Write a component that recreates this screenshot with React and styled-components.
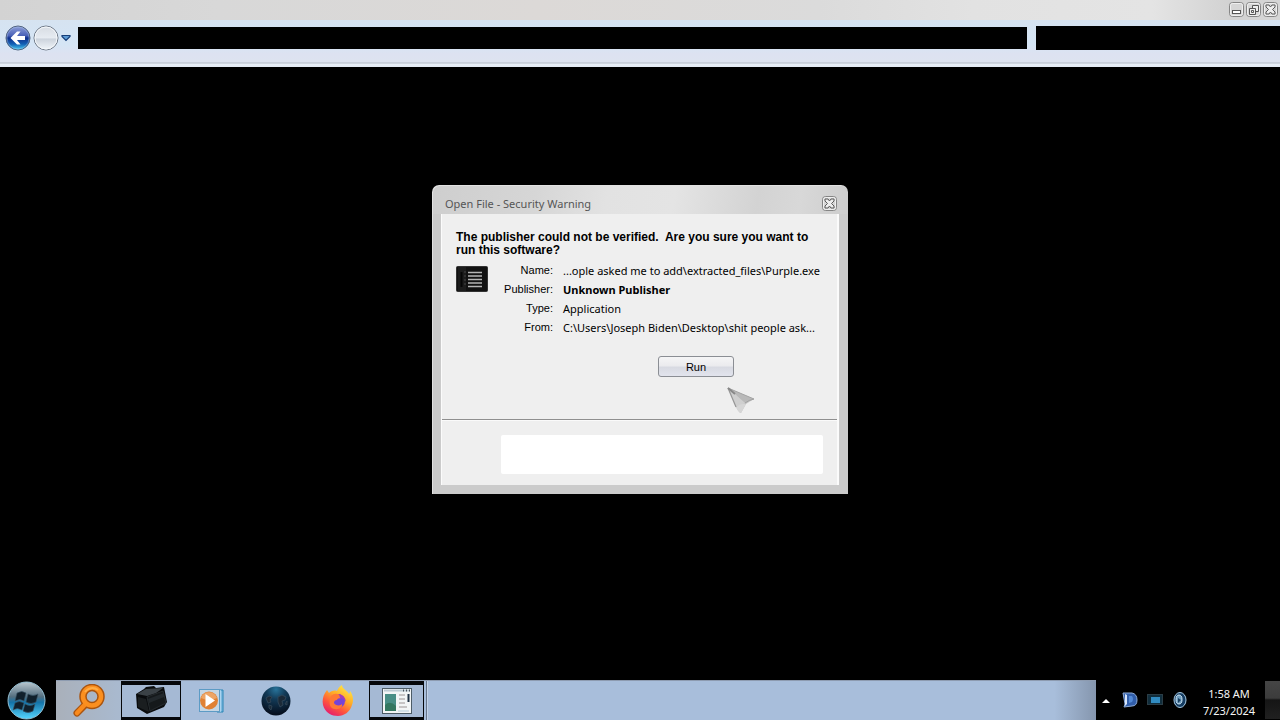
import React from "react";
import styled, { createGlobalStyle, css } from "styled-components";

const GlobalStyle = createGlobalStyle`
  * { box-sizing: border-box; }
  body { margin: 0; background: #000; }
  button, input { font: inherit; }
`;

const ui = `"Noto Sans", "Open Sans", sans-serif`;
const classic = `"Liberation Sans", Arial, sans-serif`;

const Screen = styled.div`
  min-height: 100vh;
  display: flex;
  flex-direction: column;
  background: #000;
  font-family: ${ui};
  font-size: 11px;
`;

const TitleStrip = styled.header`
  height: 20px;
  flex: none;
  display: flex;
  justify-content: flex-end;
  align-items: center;
  gap: 2px;
  padding: 0 2px 1px;
  background: linear-gradient(90deg, #d3d3d3 0%, #d8d8d8 17%, #dcd9d7 42%, #dbdbdb 64%, #e2e2e2 76%, #e4e4e4 90%, #d2d2d2 96%, #d6d6d6 100%);
`;

const IconButton = styled.button`
  flex: none;
  display: flex;
  padding: 0;
  border: 0;
  background: none;
`;

const NavBar = styled.nav`
  height: 47px;
  flex: none;
  display: flex;
  align-items: flex-start;
  padding: 6px 0 0 5px;
  background: linear-gradient(180deg, #d6e3f1 0, #d5e5f5 24px, #dde2f1 34px, #dde3f0 42px, #b4bbc6 43px, #e9f0f8 44px, #e3eaf4 47px);
`;

const NavButtons = styled.div`
  display: flex;
  align-items: center;
  gap: 2px;
  width: 73px;
  height: 24px;
  flex: none;
`;

const Fields = styled.div`
  flex: 1;
  display: flex;
  gap: 9px;
  min-width: 0;
`;

const Field = styled.input`
  min-width: 0;
  height: ${(p) => (p.$search ? 24 : 22)}px;
  flex: ${(p) => (p.$search ? "0 0 244px" : "1 1 0")};
  margin-top: ${(p) => (p.$search ? 0 : 1)}px;
  padding: 0 6px;
  border: 0;
  border-radius: 0;
  background: #000;
  color: #fff;
`;

const Workspace = styled.main`
  flex: 1;
  padding: 118px 16px 24px;
  background: #000;
`;

const Dialog = styled.section`
  width: 416px;
  max-width: 100%;
  margin: 0 auto;
  padding: 0 9px 9px;
  border-radius: 7px 7px 0 0;
  background:
    linear-gradient(100deg, #cecece 0%, #d6d6d6 25%, #e2e2e2 42%, #e4e4e4 58%, #d3d3d3 78%, #d8d8d8 88%, #cdcdcd 100%) top / 100% 29px no-repeat,
    #cbcbcb;
  box-shadow: inset 1px 1px 0 #e2e2e2;
`;

const DialogTitle = styled.div`
  height: 29px;
  display: flex;
  align-items: center;
  justify-content: space-between;
  padding: 8px 2px 0 4px;
`;

const Title = styled.h1`
  margin: 0;
  font-size: 11px;
  line-height: 16px;
  font-weight: 400;
  color: #555;
`;

const DialogBody = styled.div`
  border: solid #fbfbfb;
  border-width: 0 2px 0 1px;
  background: #efefef;
`;

const Message = styled.div`
  padding: 17px 14px 42px;
  border-bottom: 1px solid #8f8f8f;
`;

const Warning = styled.h2`
  margin: 0;
  font-family: ${classic};
  font-size: 12px;
  line-height: 13px;
  font-weight: 700;
  white-space: pre-wrap;
  color: #000;
`;

const Summary = styled.div`
  display: flex;
  gap: 10px;
  margin-top: 4px;
`;

const AppIcon = styled.svg`
  flex: none;
  margin-top: 5px;
`;

const Details = styled.dl`
  flex: 1;
  min-width: 0;
  margin: 0;
  display: grid;
  grid-template-columns: 55px 1fr;
  column-gap: 10px;
  line-height: 19px;
  color: #000;
`;

const Label = styled.dt`
  font-family: ${classic};
  font-size: 11px;
  text-align: right;
`;

const Value = styled.dd`
  margin: 0;
  white-space: nowrap;
  font-weight: ${(p) => (p.$strong ? 700 : 400)};
`;

const Actions = styled.div`
  display: flex;
  justify-content: flex-end;
  margin-top: 19px;
  padding-right: 89px;
`;

const RunButton = styled.button`
  width: 76px;
  height: 21px;
  padding: 0;
  border: 1px solid #8b8e94;
  border-radius: 3px;
  background: linear-gradient(180deg, #f5f5f6 0%, #ebebee 45%, #d8dae2 55%, #e2e4ed 100%);
  font-family: ${classic};
  font-size: 11px;
  color: #000;
`;

const Footer = styled.div`
  padding: 14px 14px 11px 59px;
  border-top: 1px solid #fafafa;
`;

const Notice = styled.div`
  height: 39px;
  border-radius: 2px;
  background: #fff;
`;

const Pointer = styled.svg`
  position: absolute;
  left: calc(50% + 86px);
  top: 386px;
  pointer-events: none;
`;

const Taskbar = styled.footer`
  height: 40px;
  flex: none;
  display: flex;
  background: #000;
`;

const StartButton = styled(IconButton)`
  width: 56px;
  padding: 1px 0 0 7px;
`;

const TaskList = styled.div`
  flex: 1;
  min-width: 0;
  display: flex;
  border-top: 1px solid #8d9bb0;
  background: linear-gradient(90deg, #a9b0ba 0, #a9b9ce 60px, #a8bedb 130px, #a8bedb 96%, #8596ae 100%);
`;

const active = css`
  border: solid #05070a;
  border-width: 4px 1px 3px;
  background: #a5b9d4;
`;

const Task = styled.button`
  width: ${(p) => p.$width}px;
  flex: none;
  display: flex;
  align-items: center;
  justify-content: center;
  padding: 0;
  border: 0;
  background: none;
  ${(p) => p.$active && active}
`;

const Divider = styled.div`
  width: 2px;
  margin-left: 2px;
  border-left: 1px solid #66758a;
  border-right: 1px solid #c3d3e8;
`;

const Tray = styled.div`
  width: 184px;
  flex: none;
  display: flex;
  align-items: center;
  padding-left: 6px;
`;

const TrayIcons = styled.div`
  flex: 1;
  display: flex;
  align-items: center;
  gap: 9px;
`;

const HiddenIcons = styled(IconButton)`
  margin-right: 3px;
`;

const Clock = styled.time`
  width: 64px;
  padding-top: 3px;
  font-size: 11px;
  line-height: 17px;
  text-align: center;
  color: #f4f4f4;
`;

const ShowDesktop = styled.button`
  width: 15px;
  height: 38px;
  margin-left: 4px;
  padding: 0;
  border: 0;
  background: linear-gradient(180deg, #454545 0, #3c3c3c 45%, #151515 50%, #202020 100%);
`;

const BoxedGlyph = ({ children }) => (
  <svg width="15" height="15" viewBox="0 0 15 15" fill="none">
    <rect x=".5" y=".5" width="14" height="14" rx="3" fill="#d6d6d6" stroke="#858585" />
    <rect x="1.5" y="1.5" width="12" height="12" rx="2" stroke="#efefef" />
    {children}
  </svg>
);

const CloseGlyph = () => (
  <BoxedGlyph>
    <path d="M3 3h3l1.500 2L9 3h3v2L9.500 7.500 12 10v2H9l-1.500-2L6 12H3v-2l2.500-2.500L3 5z" fill="#eee" stroke="#5a5a5a" />
  </BoxedGlyph>
);

const details = [
  { label: "Name:", value: "...ople asked me to add\\extracted_files\\Purple.exe" },
  { label: "Publisher:", value: "Unknown Publisher", strong: true },
  { label: "Type:", value: "Application" },
  { label: "From:", value: "C:\\Users\\Joseph Biden\\Desktop\\shit people ask..." },
];

const SearchArt = () => (
  <svg width="34" height="34" viewBox="0 0 34 34" fill="none">
    <path d="M12.500 21.500L5 29" stroke="#a9540f" strokeWidth="7" strokeLinecap="round" />
    <circle cx="20" cy="12.500" r="9" stroke="#a9540f" strokeWidth="7.500" />
    <path d="M13.500 20L5 29" stroke="#f98a1c" strokeWidth="4.500" strokeLinecap="round" />
    <circle cx="20" cy="12.500" r="9" stroke="#fb8f1f" strokeWidth="4.500" />
    <path d="M13 8a9 9 0 0 1 13-2" stroke="#ffad45" strokeWidth="2" />
  </svg>
);

const FolderArt = () => (
  <svg width="34" height="30" viewBox="0 0 34 30">
    <path d="M2 8L10 3l2-2 8-1 2 2 8-1 3 15-3 5-17 7L3 22z" fill="#090b0d" />
    <path d="M3 8l9-5 17-1-7 5-9 3z" fill="#3a4146" />
    <path d="M13 11l16-6 3 12-16 8z" fill="#15191b" stroke="#2b3135" strokeWidth=".8" />
    <path d="M4 11l8 2 3 13-11-5z" fill="#1a1e20" />
    <path d="M14 13l16-6v4l-15 6z" fill="#22282c" />
  </svg>
);

const PlayerArt = () => (
  <svg width="30" height="26" viewBox="0 0 30 26">
    <path d="M19 2h6v22h-6z" fill="#7eb9df" stroke="#2985b5" />
    <path d="M22 2v22" stroke="#d7efff" />
    <rect x="1.500" y="1.500" width="20" height="22" fill="#c5d6e4" stroke="#5c9bc5" />
    <circle cx="11" cy="12.500" r="9" fill="#e08134" />
    <path d="M3 10a8.500 8.500 0 0 1 16 0q-8 4-16 0z" fill="#eda566" />
    <path d="M7.500 6l9.500 6.500-9.500 6.500z" fill="#fff" />
  </svg>
);

const GlobeArt = () => (
  <svg width="30" height="30" viewBox="0 0 30 30">
    <defs>
      <radialGradient id="globe" cx=".5" cy=".1" r=".85">
        <stop offset="0" stopColor="#28739a" />
        <stop offset=".4" stopColor="#123a57" />
        <stop offset="1" stopColor="#06101f" />
      </radialGradient>
    </defs>
    <circle cx="15" cy="15" r="14.500" fill="url(#globe)" />
    <path d="M5 12l3-2 3 1-2 3 1 2-3 1zM8 19l3 1-1 4-2-2zM17 11l4-2 4 2-1 3-3 1 1 4-3 2-2-5zM24 18l2-3v4z" fill="#1b2a38" stroke="#34495a" strokeWidth=".8" />
  </svg>
);

const FirefoxArt = () => (
  <svg width="32" height="32" viewBox="0 0 32 32">
    <defs>
      <linearGradient id="fox" x1=".85" y1="0" x2=".25" y2="1">
        <stop offset="0" stopColor="#fff04c" />
        <stop offset=".4" stopColor="#ffad27" />
        <stop offset=".7" stopColor="#ff553c" />
        <stop offset="1" stopColor="#e31873" />
      </linearGradient>
    </defs>
    <path d="M3 8l2-3 2 3c2-2 5-3 8-2 1-3 3-5 5-6 0 4 5 5 7 9 1-1 1-2 1-3 3 4 4 9 2 14-2 7-8 11-14 11S3 28 1 20C0 16 1 11 3 8z" fill="url(#fox)" />
    <circle cx="16" cy="16" r="7" fill="#7543d8" />
    <path d="M9 11q4-4 9-1l2 3q-5 0-5 2-3 0-3 3c1 3 7 3 8 1 1 3-3 6-7 5-5 0-7-6-4-13z" fill="#ff7934" />
    <path d="M17 9q6 1 7 8-2-4-6-4z" fill="#a43bb9" />
  </svg>
);

const WindowArt = () => (
  <svg width="30" height="26" viewBox="0 0 30 26">
    <rect x=".5" y=".5" width="29" height="25" fill="#f2f5f6" stroke="#4d5c67" />
    <path d="M2 2.500h26" stroke="#bdcbd4" strokeWidth="2" />
    <path d="M21 2.500h1m2 0h1m2 0h1" stroke="#4a535c" strokeWidth="2" />
    <rect x="3" y="6" width="11" height="17" fill="#488e86" />
    <path d="M3 17q5-5 11 1v5H3z" fill="#337760" />
    <path d="M17 7h6m-6 4h6m-6 4h6m-6 4h8" stroke="#9b9494" />
    <path d="M26.500 6v8" stroke="#1e3043" strokeWidth="2" />
    <path d="M16 23h11" stroke="#b7cedb" />
  </svg>
);

const tasks = [
  { name: "Search", width: 65, Art: SearchArt },
  { name: "Explorer", width: 60, Art: FolderArt, active: true },
  { name: "Media Player", width: 63, Art: PlayerArt },
  { name: "Browser", width: 63, Art: GlobeArt },
  { name: "Firefox", width: 62, Art: FirefoxArt },
  { name: "Security Warning", width: 55, Art: WindowArt, active: true },
];

export default function App() {
  return (
    <Screen>
      <GlobalStyle />
      <TitleStrip>
        <IconButton aria-label="Minimize">
          <BoxedGlyph><rect x="3.500" y="8.500" width="8" height="3" fill="#fff" stroke="#555" /></BoxedGlyph>
        </IconButton>
        <IconButton aria-label="Restore">
          <BoxedGlyph>
            <path d="M6.500 3.500h6v6h-6z" fill="#eee" stroke="#555" />
            <path d="M3.500 6.500h6v6h-6z" fill="#eee" stroke="#555" />
            <path d="M5.500 8.500h2v2h-2z" stroke="#555" />
          </BoxedGlyph>
        </IconButton>
        <IconButton aria-label="Close"><CloseGlyph /></IconButton>
      </TitleStrip>

      <NavBar>
        <NavButtons>
          <IconButton aria-label="Back">
            <svg width="26" height="26" viewBox="0 0 26 26">
              <defs>
                <linearGradient id="back" x2="0" y2="1">
                  <stop offset="0" stopColor="#8f9fd8" />
                  <stop offset=".4" stopColor="#4a62b8" />
                  <stop offset=".5" stopColor="#0f2f8c" />
                  <stop offset=".75" stopColor="#1260b4" />
                  <stop offset="1" stopColor="#4bd1f3" />
                </linearGradient>
              </defs>
              <circle cx="13" cy="13" r="12" fill="url(#back)" stroke="#52647f" />
              <circle cx="13" cy="13" r="11" fill="none" stroke="#a9c7ec" strokeOpacity=".4" />
              <path d="M5.500 13L12 6.500h3.500l-3.500 4.500H20v4h-8l3.500 4.500H12z" fill="#fff" />
            </svg>
          </IconButton>
          <IconButton aria-label="Forward">
            <svg width="26" height="26" viewBox="0 0 26 26">
              <defs>
                <linearGradient id="forward" x2="0" y2="1">
                  <stop offset="0" stopColor="#d6dbe2" />
                  <stop offset=".48" stopColor="#e6ebf1" />
                  <stop offset=".55" stopColor="#cdd4dd" />
                  <stop offset="1" stopColor="#f2f7fb" />
                </linearGradient>
              </defs>
              <circle cx="13" cy="13" r="12" fill="url(#forward)" stroke="#707a88" />
              <circle cx="13" cy="13" r="11" fill="none" stroke="#f5f8fb" />
            </svg>
          </IconButton>
          <IconButton aria-label="Recent pages">
            <svg width="10" height="8" viewBox="0 0 10 8">
              <path d="M1 1.500h8v1L5 6.500 1 2.500z" fill="#5d9bd5" stroke="#173e79" strokeWidth="1.200" />
            </svg>
          </IconButton>
        </NavButtons>
        <Fields>
          <Field aria-label="Address" />
          <Field aria-label="Search" $search />
        </Fields>
      </NavBar>

      <Workspace>
        <Dialog role="dialog" aria-labelledby="dialog-title">
          <DialogTitle>
            <Title id="dialog-title">Open File - Security Warning</Title>
            <IconButton aria-label="Close dialog"><CloseGlyph /></IconButton>
          </DialogTitle>
          <DialogBody>
            <Message>
              <Warning>{"The publisher could not be verified.  Are you sure you want to run this software?"}</Warning>
              <Summary>
                <AppIcon width="32" height="26" viewBox="0 0 32 26">
                  <rect x=".5" y=".5" width="31" height="25" rx="1" fill="#111" stroke="#333" />
                  <path d="M2 1h8v24H2z" fill="#1c1c1c" />
                  <path d="M5.500 6v15" stroke="#050505" strokeWidth="2" />
                  <path d="M8 6h2m-2 4h2m-2 4h2m-2 4h2" stroke="#444" />
                  <path d="M12 6.500h14m-14 3.500h14m-14 3.500h14m-14 3.500h14m-14 3.500h14" stroke="#b4b4b4" strokeWidth="1.400" />
                </AppIcon>
                <Details>
                  {details.map((d) => (
                    <React.Fragment key={d.label}>
                      <Label>{d.label}</Label>
                      <Value $strong={d.strong}>{d.value}</Value>
                    </React.Fragment>
                  ))}
                </Details>
              </Summary>
              <Actions><RunButton>Run</RunButton></Actions>
            </Message>
            <Footer><Notice /></Footer>
          </DialogBody>
        </Dialog>
      </Workspace>

      <Taskbar>
        <StartButton aria-label="Start">
          <svg width="39" height="39" viewBox="0 0 39 39">
            <defs>
              <linearGradient id="orb" x2="0" y2="1">
                <stop offset="0" stopColor="#b9c7cf" />
                <stop offset=".4" stopColor="#536e7f" />
                <stop offset=".55" stopColor="#1473a8" />
                <stop offset="1" stopColor="#55d6ff" />
              </linearGradient>
            </defs>
            <circle cx="19.500" cy="19.500" r="18.500" fill="url(#orb)" stroke="#93bfd3" />
            <path d="M10 12q5-3 9 0l-2 8q-4-3-9 0zM21 13q5 3 10 0l-2 8q-5 3-10 0zM8 22q4-3 9 0l-2 7q-5-3-9 0zM18 23q5 3 10 0l-2 7q-5 3-10 0z" fill="#10202c" stroke="#375365" strokeWidth=".6" />
          </svg>
        </StartButton>
        <TaskList>
          {tasks.map(({ name, width, Art, active: on }) => (
            <Task key={name} aria-label={name} $width={width} $active={on}><Art /></Task>
          ))}
          <Divider />
        </TaskList>
        <Tray>
          <TrayIcons>
            <HiddenIcons aria-label="Show hidden icons">
              <svg width="8" height="16" viewBox="0 0 8 16"><path d="M0 11l4-4 4 4z" fill="#fff" /></svg>
            </HiddenIcons>
            <svg width="16" height="18" viewBox="0 0 16 18">
              <path d="M1 2h9q5 1 5 7t-5 6l-8 1 1-3z" fill="#315eaa" stroke="#8eacd8" />
              <path d="M3 3l2 1v9l-2 2z" fill="#d7e5fb" />
              <path d="M7 5h3q2 3 0 6l-3 1z" fill="#5289d5" />
            </svg>
            <svg width="16" height="18" viewBox="0 0 16 18">
              <rect x=".5" y="3.500" width="15" height="10" fill="#102d3c" stroke="#2a3c45" />
              <path d="M4 6h9v6H4z" fill="#318bc1" />
            </svg>
            <svg width="16" height="18" viewBox="0 0 16 18">
              <ellipse cx="8" cy="9" rx="6" ry="7.500" fill="#143c62" stroke="#a9cce6" />
              <ellipse cx="7" cy="8.500" rx="3" ry="4.500" fill="#6e9cbe" stroke="#d3e8f6" />
              <path d="M6 7l3 2-3 3z" fill="#183e5f" />
            </svg>
          </TrayIcons>
          <Clock>1:58 AM<br />7/23/2024</Clock>
          <ShowDesktop aria-label="Show desktop" />
        </Tray>
      </Taskbar>

      <Pointer width="30" height="30" viewBox="0 0 30 30">
        <path d="M2 2l26 11q-5 3-8 5l-5 9q-2 0-5-6z" fill="#c6c6c6" />
        <path d="M2 2l26 11q-6 2-9 4z" fill="#b9b9b9" />
        <path d="M2 2l17 15-9 4z" fill="#cfcfcf" />
        <path d="M10 21q5-4 10-3l-5 9q-3-1-5-6z" fill="#d6d6d6" />
        <path d="M2 2l8 19" stroke="#969696" strokeWidth="1.200" fill="none" />
        <path d="M2 2l26 11" stroke="#a5a5a5" fill="none" />
        <path d="M2 2l7 6" stroke="#888" strokeWidth="2" />
        <path d="M19 17q4-3 9-4" stroke="#a2a2a2" fill="none" />
      </Pointer>
    </Screen>
  );
}
